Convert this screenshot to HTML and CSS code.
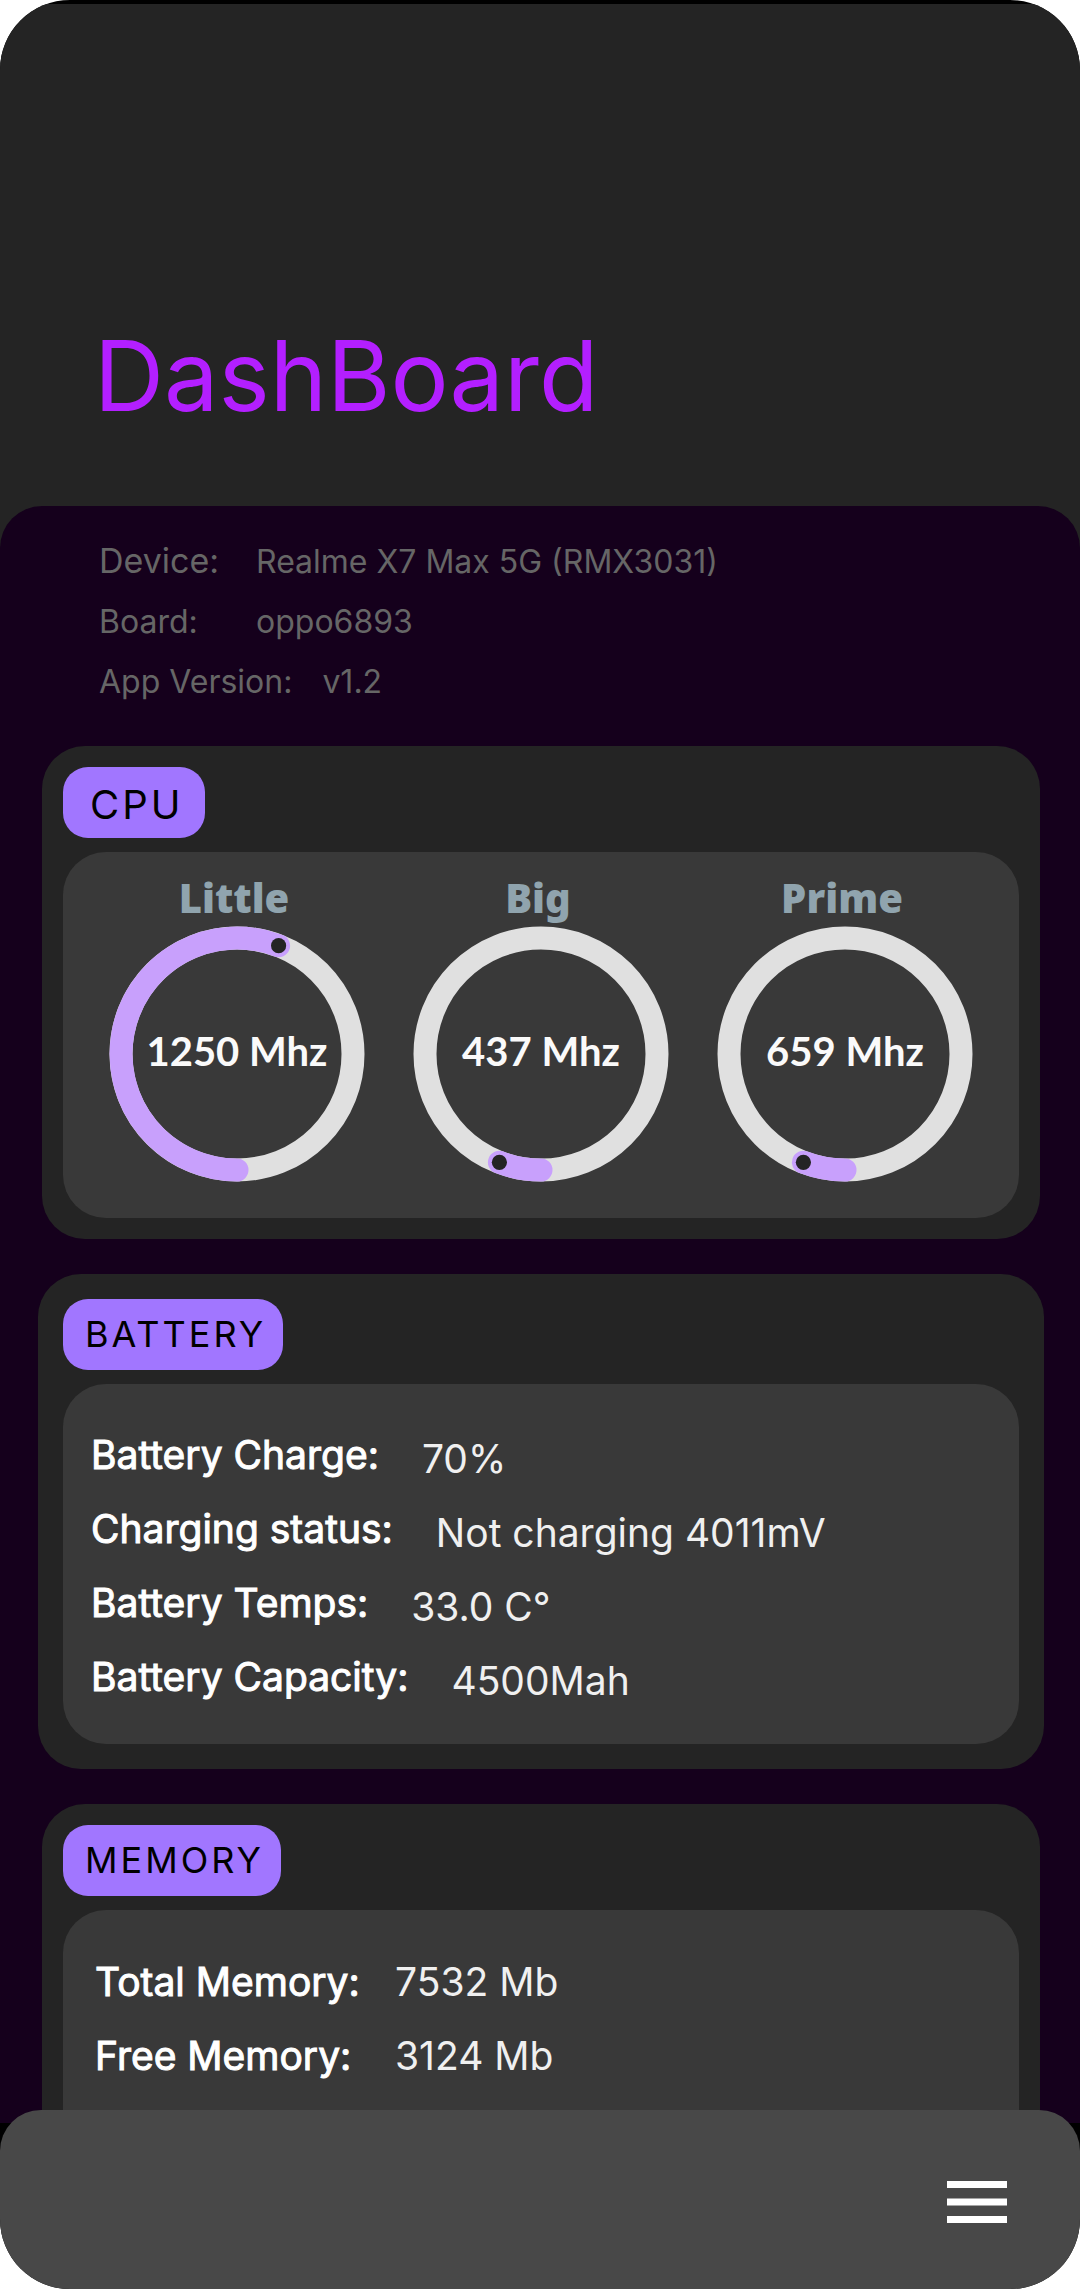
FILE: index.html
```html
<!DOCTYPE html>
<html lang="en">
<head>
<meta charset="utf-8">
<title>DashBoard</title>
<meta name="viewport" content="width=device-width, initial-scale=1">
<link rel="stylesheet" href="styles.css">
</head>
<body>
<div class="screen">
  <header class="header">
    <h1 class="title">DashBoard</h1>
  </header>
  <main class="panel">
    <dl class="device">
      <div class="device-row">
        <dt class="device-label device-label-main">Device:</dt>
        <dd class="device-value">Realme X7 Max 5G (RMX3031)</dd>
      </div>
      <div class="device-row">
        <dt class="device-label">Board:</dt>
        <dd class="device-value">oppo6893</dd>
      </div>
      <div class="device-row device-row-version">
        <dt class="device-label">App Version:</dt>
        <dd class="device-value">v1.2</dd>
      </div>
    </dl>

    <section class="card">
      <h2 class="badge badge-large">CPU</h2>
      <div class="card-body gauges">
        <div class="gauge">
          <h3 class="gauge-name">Little</h3>
          <div class="gauge-dial">
            <svg class="gauge-ring" viewBox="0 0 256 256" aria-hidden="true">
              <circle class="ring-track" cx="128" cy="128" r="116"/>
              <path class="ring-value" d="M128 244A116 116 0 1 1 169.6 19.7"/>
              <circle class="ring-dot" cx="169.6" cy="19.7" r="7.6"/>
            </svg>
            <span class="gauge-value">1250 Mhz</span>
          </div>
        </div>
        <div class="gauge">
          <h3 class="gauge-name">Big</h3>
          <div class="gauge-dial">
            <svg class="gauge-ring" viewBox="0 0 256 256" aria-hidden="true">
              <circle class="ring-track" cx="128" cy="128" r="116"/>
              <path class="ring-value" d="M128 244A116 116 0 0 1 86.4 236.3"/>
              <circle class="ring-dot" cx="86.4" cy="236.3" r="7.6"/>
            </svg>
            <span class="gauge-value">437 Mhz</span>
          </div>
        </div>
        <div class="gauge">
          <h3 class="gauge-name">Prime</h3>
          <div class="gauge-dial">
            <svg class="gauge-ring" viewBox="0 0 256 256" aria-hidden="true">
              <circle class="ring-track" cx="128" cy="128" r="116"/>
              <path class="ring-value" d="M128 244A116 116 0 0 1 86.4 236.3"/>
              <circle class="ring-dot" cx="86.4" cy="236.3" r="7.6"/>
            </svg>
            <span class="gauge-value">659 Mhz</span>
          </div>
        </div>
      </div>
    </section>

    <section class="card card-battery">
      <h2 class="badge">BATTERY</h2>
      <dl class="card-body stats">
        <div class="stat"><dt class="stat-label">Battery Charge:</dt><dd class="stat-value">70%</dd></div>
        <div class="stat"><dt class="stat-label">Charging status:</dt><dd class="stat-value">Not charging 4011mV</dd></div>
        <div class="stat"><dt class="stat-label">Battery Temps:</dt><dd class="stat-value">33.0 C°</dd></div>
        <div class="stat"><dt class="stat-label">Battery Capacity:</dt><dd class="stat-value">4500Mah</dd></div>
      </dl>
    </section>

    <section class="card card-memory">
      <h2 class="badge">MEMORY</h2>
      <dl class="card-body stats stats-memory">
        <div class="stat"><dt class="stat-label">Total Memory:</dt><dd class="stat-value">7532 Mb</dd></div>
        <div class="stat"><dt class="stat-label">Free Memory:</dt><dd class="stat-value">3124 Mb</dd></div>
      </dl>
    </section>
  </main>
  <nav class="navbar">
    <button class="menu" type="button" aria-label="Menu">
      <svg class="menu-icon" viewBox="0 0 60 44" aria-hidden="true">
        <path d="M0 4.500H60M0 22H60M0 39.500H60"/>
      </svg>
    </button>
  </nav>
</div>
</body>
</html>
```
FILE: styles.css
```css
* {
  box-sizing: border-box;
}

body {
  margin: 0;
  background: #fff;
  font-family: Inter, "Liberation Sans", sans-serif;
}

h1, h2, h3, dl, dt, dd {
  margin: 0;
}

.screen {
  display: flex;
  flex-direction: column;
  min-height: 100vh;
  overflow: hidden;
  border-radius: 70px;
  background: #000;
}

.header {
  margin-top: 4px;
  padding: 312px 94px 129px;
  background: #242424;
}

.title {
  color: #b31fff;
  font-size: 97px;
  font-weight: 400;
  line-height: 120px;
}

.panel {
  display: flex;
  flex-direction: column;
  flex: 1;
  gap: 35px;
  margin-top: -59px;
  padding: 25px 40px 0 42px;
  border-radius: 42px 42px 0 0;
  background: #15001c;
}

.device {
  display: grid;
  margin-bottom: -1px;
  padding-left: 57px;
  color: #666;
  font-size: 32px;
  line-height: 60px;
}

.device-row {
  display: grid;
  grid-template-columns: 157px 1fr;
  align-items: baseline;
}

.device-row-version {
  grid-template-columns: auto 1fr;
  column-gap: 30px;
}

.device-label-main {
  font-size: 34px;
}

.card {
  padding: 21px;
  border-radius: 43px;
  background: #242424;
}

.card-battery {
  margin: 0 -4px;
  padding: 25px;
}

.card-memory {
  display: flex;
  flex-direction: column;
  flex: 1;
  padding-bottom: 0;
  border-radius: 43px 43px 0 0;
}

.badge {
  width: fit-content;
  padding: 0 17px 0 22px;
  border-radius: 25px;
  background: #a176ff;
  color: #000;
  font-size: 36px;
  font-weight: 400;
  letter-spacing: 3px;
  line-height: 71px;
}

.badge-large {
  padding: 5px 21px 0 27px;
  font-size: 40px;
  line-height: 66px;
}

.card-body {
  margin-top: 14px;
  border-radius: 43px;
  background: #393939;
}

.gauges {
  display: flex;
  justify-content: center;
  gap: 48px;
  padding: 22px 0 36px;
}

.gauge {
  text-align: center;
}

.gauge-name {
  padding: 0 6px 4px 0;
  color: #90a4ae;
  font-family: "Noto Sans", sans-serif;
  font-size: 40px;
  font-weight: 900;
  line-height: 48px;
}

.gauge-dial {
  display: grid;
  place-items: center;
  width: 256px;
}

.gauge-ring,
.gauge-value {
  grid-area: 1 / 1;
}

.gauge-ring {
  display: block;
  width: 100%;
  fill: none;
  stroke-width: 23;
}

.ring-track {
  stroke: #e0e0e0;
}

.ring-value {
  stroke: #c8a0fc;
  stroke-linecap: round;
}

.ring-dot {
  fill: #242424;
}

.gauge-value {
  padding-bottom: 6px;
  color: #fafafa;
  font-family: Lato, sans-serif;
  font-size: 40px;
  font-weight: 700;
}

.stats {
  padding: 36px 28px 28px;
  font-size: 39px;
  line-height: 70px;
}

.stats-memory {
  flex: 1;
  padding: 35px 32px 12px;
  border-radius: 43px 43px 0 0;
  line-height: 74px;
}

.stat {
  display: flex;
  gap: 43px;
}

.stat-label {
  color: #fff;
  -webkit-text-stroke: 1px #fff;
}

.stat-value {
  padding-top: 4px;
  color: #f0f0f0;
}

.stats-memory .stat {
  display: grid;
  grid-template-columns: 300px 1fr;
  gap: 0;
}

.stats-memory .stat-value {
  padding-top: 0;
}

.navbar {
  display: flex;
  justify-content: flex-end;
  align-items: center;
  margin-top: -13px;
  padding: 58px 73px 53px;
  border-radius: 41px 41px 0 0;
  background: #484848;
}

.menu {
  padding: 12px 0;
  border: 0;
  background: none;
}

.menu-icon {
  display: block;
  width: 60px;
  stroke: #fff;
  stroke-width: 7;
}
```
